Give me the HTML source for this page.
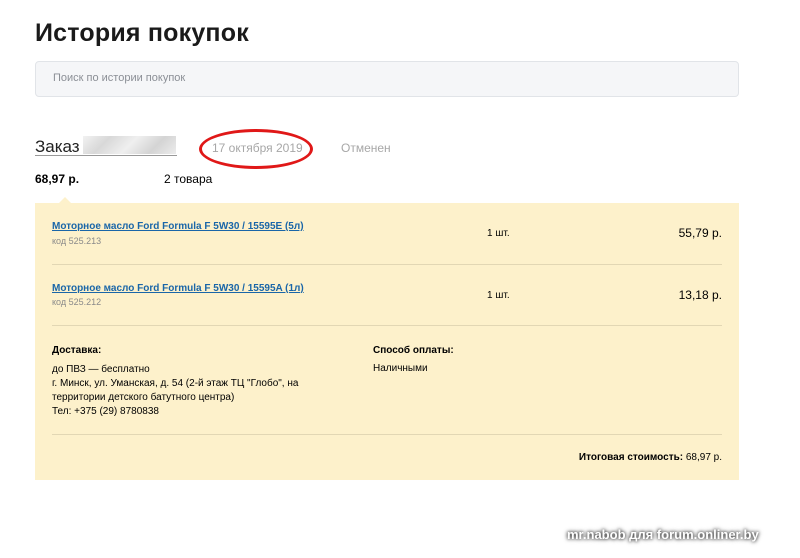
<!DOCTYPE html>
<html><head><meta charset="utf-8"><style>
body{margin:0;width:800px;height:558px;background:#fff;position:relative;overflow:hidden;font-family:"Liberation Sans",Arial,sans-serif;color:#000}
.a{position:absolute;white-space:nowrap}
h1{position:absolute;left:35px;top:19px;margin:0;font-size:25px;font-weight:bold;color:#1a1a1a;letter-spacing:0.2px}
.search{position:absolute;left:35px;top:61px;width:702px;height:34px;background:#f5f6f8;border:1px solid #e1e4e8;border-radius:4px}
.box{position:absolute;left:35px;top:203px;width:704px;height:277px;background:#fdf1cb}
.line{position:absolute;left:17px;width:670px;height:1px;background:#e2d7b4}
.lnk{color:#1a66a8;text-decoration:underline;font-weight:bold;font-size:10px}
.sm{font-size:10px}
.gr{color:#8a8a8a;font-size:9px}
</style></head><body>
<h1>История покупок</h1>
<div class="search"><span class="a" style="left:17px;top:10px;font-size:11px;color:#8b8f96">Поиск по истории покупок</span></div>

<div class="a" style="left:35px;top:137px;font-size:17px;color:#222">Заказ</div>
<div class="a" style="left:83px;top:136px;width:93px;height:18px;background:linear-gradient(135deg,#f2f2f2,#d8d8d8,#efefef,#d4d4d4,#ececec)"></div>
<div class="a" style="left:35px;top:155px;width:142px;height:1px;background:#999"></div>
<div class="a" style="left:212px;top:141px;font-size:12px;color:#a7a7a7">17 октября 2019</div>
<div class="a" style="left:199px;top:129px;width:114px;height:40px;border:3px solid #e01818;border-radius:50%;box-sizing:border-box"></div>
<div class="a" style="left:341px;top:141px;font-size:12px;color:#a7a7a7">Отменен</div>
<div class="a" style="left:35px;top:172px;font-size:12px;font-weight:bold">68,97 р.</div>
<div class="a" style="left:164px;top:172px;font-size:12px">2 товара</div>

<div class="box">
<div class="a" style="left:24px;top:-6px;width:0;height:0;border-left:6px solid transparent;border-right:6px solid transparent;border-bottom:6px solid #fdf1cb"></div>
<div class="a lnk" style="left:17px;top:18px">Моторное масло Ford Formula F 5W30 / 15595E (5л)</div>
<div class="a gr" style="left:17px;top:33px">код 525.213</div>
<div class="a sm" style="left:452px;top:25px">1 шт.</div>
<div class="a" style="right:17px;top:23px;font-size:12px">55,79 р.</div>
<div class="line" style="top:61px"></div>
<div class="a lnk" style="left:17px;top:80px">Моторное масло Ford Formula F 5W30 / 15595A (1л)</div>
<div class="a gr" style="left:17px;top:94px">код 525.212</div>
<div class="a sm" style="left:452px;top:87px">1 шт.</div>
<div class="a" style="right:17px;top:85px;font-size:12px">13,18 р.</div>
<div class="line" style="top:122px"></div>
<div class="a sm" style="left:17px;top:142px;font-weight:bold">Доставка:</div>
<div class="a sm" style="left:17px;top:160px;line-height:14px">до ПВЗ — бесплатно<br>г. Минск, ул. Уманская, д. 54 (2-й этаж ТЦ "Глобо", на<br>территории детского батутного центра)<br>Тел: +375 (29) 8780838</div>
<div class="a sm" style="left:338px;top:142px;font-weight:bold">Способ оплаты:</div>
<div class="a sm" style="left:338px;top:160px">Наличными</div>
<div class="line" style="top:231px"></div>
<div class="a sm" style="right:17px;top:249px"><b>Итоговая стоимость:</b> 68,97 р.</div>
</div>

<div class="a" style="left:567px;top:527px;font-size:13px;font-weight:bold;color:#fff;text-shadow:0 0 3px #333,0 0 5px #555">mr.nabob для forum.onliner.by</div>
</body></html>
